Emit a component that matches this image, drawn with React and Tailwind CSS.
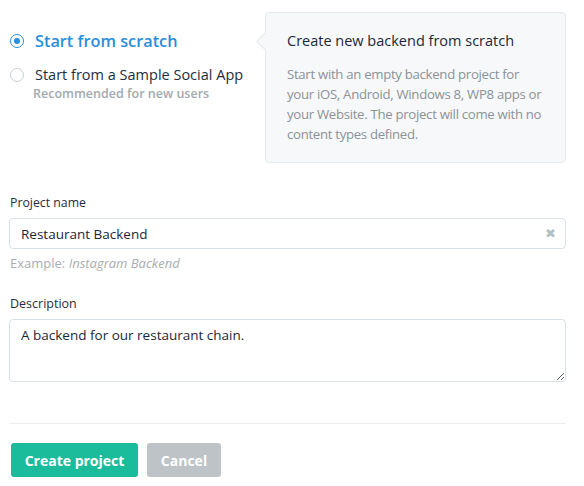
import { useState } from "react";

function Radio({ checked }) {
  return (
    <span
      className={`flex h-[14px] w-[14px] shrink-0 items-center justify-center rounded-full border-[1.5px] bg-white ${
        checked ? "border-[#2a8fdb]" : "border-[#c9cfd4]"
      }`}
    >
      {checked && <span className="h-[6px] w-[6px] rounded-full bg-[#2a8fdb]" />}
    </span>
  );
}

export default function App() {
  const [name, setName] = useState("Restaurant Backend");
  const [description, setDescription] = useState(
    "A backend for our restaurant chain."
  );

  return (
    <div
      className="h-[486px] w-[584px] overflow-hidden bg-white pl-[9px] pr-[18px] text-[#2c3e50]"
      style={{ fontFamily: '"Open Sans", "Liberation Sans", sans-serif' }}
    >
      <section className="flex pt-[12px]">
        <div className="w-[256px] shrink-0 pt-[17px]">
          <label className="flex items-center gap-[11px] pl-[1px]">
            <Radio checked />
            <span className="text-[16.3px] leading-[24px] font-semibold text-[#2a8fdb]">
              Start from scratch
            </span>
          </label>
          <label className="mt-[12px] flex items-center gap-[11px] pl-[1px]">
            <Radio />
            <span className="text-[14.5px] leading-[20px] text-[#1f2d3d]">
              Start from a Sample Social App
            </span>
          </label>
          <p className="pl-[24px] text-[12.5px] leading-[18px] font-semibold text-[#a3a9ae]">
            Recommended for new users
          </p>
        </div>

        <div className="relative h-[151px] flex-1 rounded-[4px] border border-[#e4e9ec] bg-[#f6f8fa] pt-[17px] pl-[21px] pr-[8px]">
          <span className="absolute top-[22px] left-[-7px] h-[13px] w-[13px] rotate-45 border-b border-l border-[#e4e9ec] bg-[#f6f8fa]" />
          <h2 className="text-[14.5px] leading-[22px] text-[#1c2837]">
            Create new backend from scratch
          </h2>
          <p className="mt-[12px] max-w-[259px] text-[13.2px] leading-[20px] tracking-[-0.3px] text-[#8b9298]">
            Start with an empty backend project for your iOS, Android, Windows
            8, WP8 apps or your Website. The project will come with no content
            types defined.
          </p>
        </div>
      </section>

      <div className="mt-[31px]">
        <label className="block pl-[1px] text-[12.3px] leading-[18px] text-[#1f2d3d]">
          Project name
        </label>
        <div className="relative mt-[6px]">
          <input
            value={name}
            onChange={(e) => setName(e.target.value)}
            className="h-[31px] w-full rounded-[4px] border-[1.5px] border-[#d8e2e6] bg-white px-[11px] text-[13.5px] text-[#1c2837] outline-none"
          />
          <span className="absolute top-[6px] right-[10px] text-[13px] leading-[18px] text-[#b5c0c2]">
            ✖
          </span>
        </div>
        <p className="mt-[5px] pl-[1px] text-[13px] leading-[18px] text-[#a8adb1]">
          Example: <span className="italic">Instagram Backend</span>
        </p>
      </div>

      <div className="mt-[23px]">
        <label className="block pl-[1px] text-[12.5px] leading-[18px] text-[#1f2d3d]">
          Description
        </label>
        <textarea
          value={description}
          onChange={(e) => setDescription(e.target.value)}
          className="mt-[6px] block h-[63px] w-full resize-y rounded-[4px] border-[1.5px] border-[#d8e2e6] bg-white px-[11px] py-[5px] text-[13.5px] leading-[20px] text-[#1c2837] outline-none"
        />
      </div>

      <div className="mt-[41px] border-t-[1.5px] border-[#eceff1]" />

      <div className="mt-[19px] flex gap-[9px] pl-[2px]">
        <button className="h-[34px] w-[127px] rounded-[3px] bg-[#1abc9c] text-[14px] font-bold text-white">
          Create project
        </button>
        <button className="h-[34px] w-[74px] rounded-[3px] bg-[#bdc3c7] text-[14px] font-bold text-white">
          Cancel
        </button>
      </div>
    </div>
  );
}
